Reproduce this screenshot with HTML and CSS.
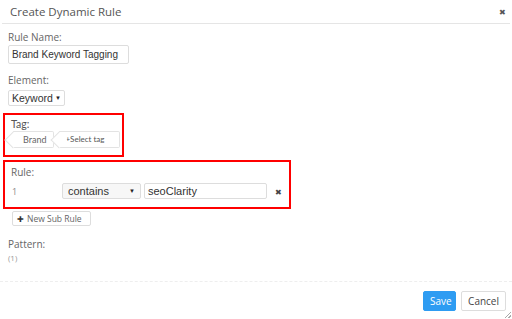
FILE: index.html
```html
<!DOCTYPE html>
<html lang="en">
<head>
  <meta charset="UTF-8">
  <title>Create Dynamic Rule</title>
  <link rel="stylesheet" href="styles.css">
</head>
<body>

<div class="dialog">
  <div class="dialog-header">
    <span class="dialog-title">Create Dynamic Rule</span>
    <span class="close">&#10006;</span>
  </div>

  <div class="dialog-body">
    <div class="field">
      <label>Rule Name:</label>
      <div class="text-input name-input">Brand Keyword Tagging</div>
    </div>

    <div class="field">
      <label>Element:</label>
      <div class="select element-select">Keyword <span class="caret">&#9660;</span></div>
    </div>

    <div class="highlight tag-box">
      <label class="tag-label">Tag:</label>
      <div class="tags">
        <span class="tag">Brand</span>
        <span class="tag add-tag">+Select tag</span>
      </div>
    </div>

    <div class="highlight rule-box">
      <label>Rule:</label>
      <div class="rule-row">
        <span class="rule-num">1</span>
        <div class="select op-select">contains <span class="caret">&#9660;</span></div>
        <div class="text-input value-input">seoClarity</div>
        <span class="remove">&#10006;</span>
      </div>
    </div>

    <button class="sub-rule"><span class="plus">&#10010;</span> New Sub Rule</button>

    <div class="field pattern">
      <label>Pattern:</label>
      <div class="pattern-value">(1)</div>
    </div>
  </div>

  <div class="dialog-footer">
    <button class="btn btn-primary">Save</button>
    <button class="btn">Cancel</button>
  </div>
  <span class="resize"></span>
</div>

</body>
</html>
```

FILE: styles.css
```css
* {
  box-sizing: border-box;
}

body {
  margin: 0;
  background: #fff;
  font-family: "Open Sans", sans-serif;
  color: #555;
}

.dialog {
  position: relative;
  width: 512px;
  height: 319px;
  display: flex;
  flex-direction: column;
}

.dialog-header {
  height: 24px;
  margin: 0 2px;
  padding: 0 4px 0 8px;
  border-bottom: 1px solid #e5e5e5;
  display: flex;
  align-items: center;
  justify-content: space-between;
}

.dialog-title {
  font-size: 11.5px;
  color: #555;
}

.close {
  font-size: 8px;
  color: #555;
}

.dialog-body {
  flex: 1;
  padding: 6px 0 0 0;
}

label {
  display: block;
  font-size: 10px;
  color: #666;
  line-height: 14px;
}

.field {
  padding-left: 8px;
}

.text-input,
.select {
  border: 1px solid #ddd;
  border-radius: 2px;
  font-family: "Liberation Sans", Arial, sans-serif;
  font-size: 10.5px;
  color: #333;
  background: #fff;
}

.name-input {
  width: 121px;
  height: 19px;
  margin-top: 1px;
  padding: 2px 3px;
  font-size: 10px;
  line-height: 13px;
}

.element-select {
  width: 57px;
  height: 16px;
  margin-top: 3px;
  padding: 0 3px;
  line-height: 14px;
  display: flex;
  justify-content: space-between;
}

.field + .field {
  margin-top: 9px;
}

.caret {
  font-size: 6px;
  color: #222;
}

.highlight {
  border: 2px solid #f00;
  margin-left: 3px;
  padding-left: 6px;
}

.tag-box {
  width: 121px;
  height: 44px;
  margin-top: 7px;
  padding-top: 2px;
}

.tag-label {
  font-family: Lato, sans-serif;
  font-size: 10.5px;
  color: #555;
}

.tags {
  display: flex;
  gap: 5px;
  padding-left: 2px;
}

.tag {
  position: relative;
  height: 17px;
  line-height: 15px;
  border: 1px solid #e3e3e3;
  border-left: none;
  border-radius: 0 2px 2px 0;
  font-family: Lato, sans-serif;
  font-size: 9px;
  color: #666;
  padding: 0 7px 0 10px;
  white-space: nowrap;
}

.tag::before {
  content: "";
  position: absolute;
  left: -6px;
  top: 2px;
  width: 11px;
  height: 11px;
  border-left: 1px solid #e3e3e3;
  border-bottom: 1px solid #e3e3e3;
  transform: rotate(45deg);
  background: #fff;
}

.tag.add-tag {
  width: 61px;
  padding-left: 6px;
  font-size: 8px;
  color: #555;
}

.rule-box {
  width: 288px;
  height: 49px;
  margin-top: 3px;
  padding-top: 3px;
}

.rule-row {
  display: flex;
  align-items: center;
  margin-top: 4px;
  padding-left: 1px;
}

.rule-num {
  width: 50px;
  font-size: 9px;
  color: #888;
}

.op-select {
  width: 79px;
  height: 16px;
  padding: 0 5px;
  font-size: 11px;
  line-height: 14px;
  display: flex;
  justify-content: space-between;
  background: #f7f7f7;
}

.value-input {
  width: 123px;
  height: 16px;
  margin-left: 3px;
  padding: 0 3px;
  font-size: 11px;
  line-height: 14px;
}

.remove {
  margin-left: 8px;
  font-size: 8px;
  color: #444;
}

.sub-rule {
  display: flex;
  align-items: center;
  gap: 3px;
  margin: 2px 0 0 12px;
  width: 79px;
  height: 15px;
  padding: 0 4px;
  border: 1px solid #ddd;
  border-radius: 2px;
  background: #fff;
  font-family: "Open Sans", sans-serif;
  font-size: 8.5px;
  color: #666;
  white-space: nowrap;
}

.plus {
  font-size: 8px;
  color: #333;
}

.pattern {
  margin-top: 11px;
}

.pattern-value {
  font-size: 8px;
  color: #999;
  margin-top: 1px;
}

.dialog-footer {
  height: 38px;
  border-top: 1px dashed #eee;
  display: flex;
  justify-content: flex-end;
  align-items: flex-start;
  gap: 5px;
  padding: 9px 6px 0 0;
}

.btn {
  height: 20px;
  padding: 0 6px;
  border: 1px solid #ddd;
  border-radius: 2px;
  background: #fff;
  font-family: "Open Sans", sans-serif;
  font-size: 10px;
  color: #444;
}

.btn-primary {
  width: 33px;
  background: #2e9cf2;
  border-color: #2e9cf2;
  color: #fff;
}

.resize {
  position: absolute;
  right: 1px;
  bottom: 1px;
  width: 6px;
  height: 6px;
  background: linear-gradient(135deg, transparent 45%, #aaa 45%, #aaa 55%, transparent 55%, transparent 75%, #aaa 75%, #aaa 85%, transparent 85%);
}
```
